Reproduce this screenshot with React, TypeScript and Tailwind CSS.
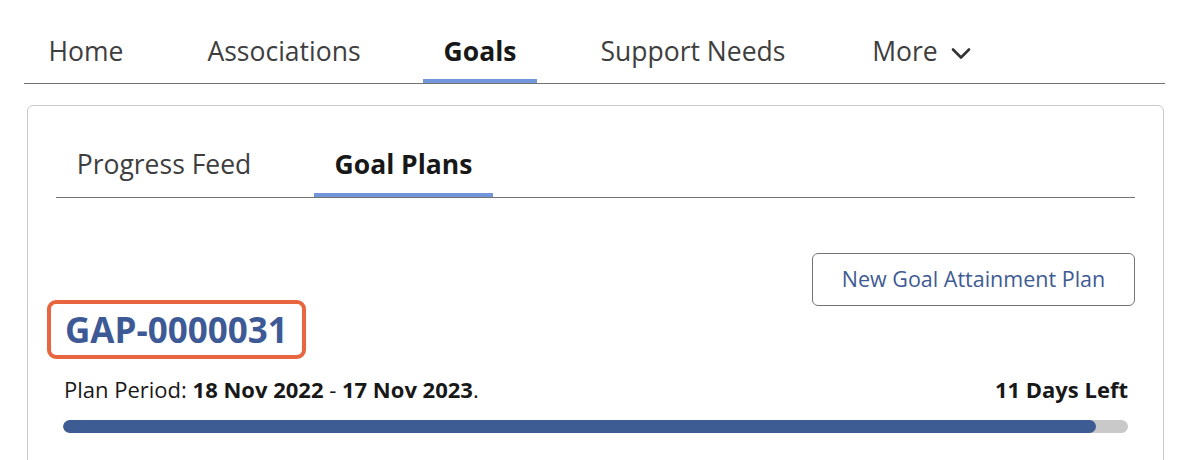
import React from "react";

const navItems = [
  { label: "Home", width: "w-[118px]" },
  { label: "Associations", width: "w-[196px]" },
  { label: "Goals", width: "w-[114px]", active: true },
  { label: "Support Needs", width: "w-[230px]" },
];

function Chevron() {
  return (
    <svg width="22" height="22" viewBox="0 0 22 22" fill="none" className="ml-[12px] mt-[4px]">
      <path d="M3 7.5 L11 15.5 L19 7.5" stroke="#333333" strokeWidth="2.6" strokeLinecap="round" strokeLinejoin="round" />
    </svg>
  );
}

export default function App() {
  const progress = 97;
  return (
    <div
      className="w-[1192px] h-[460px] bg-white overflow-hidden text-[#3e3e3e]"
      style={{ fontFamily: "'Open Sans', 'Noto Sans', sans-serif" }}
    >
      {/* Top nav */}
      <div className="ml-[24px] mr-[27px] pt-[30px] border-b border-[#747474]">
        <div className="flex gap-[41px] pl-[3px]">
          {navItems.map((item) => (
            <div
              key={item.label}
              className={`${item.width} h-[53px] flex justify-center items-start text-[26.5px] leading-[42px] border-b-4 ${
                item.active ? "border-[#7395db] font-bold text-[#181818]" : "border-transparent"
              }`}
            >
              {item.label}
            </div>
          ))}
          <div className="w-[146px] h-[53px] flex justify-center items-start text-[26.5px] leading-[42px]">
            <span>More</span>
            <span className="h-[42px] flex items-center">
              <Chevron />
            </span>
          </div>
        </div>
      </div>

      {/* Card */}
      <div className="ml-[27px] mr-[28px] mt-[21px] h-[400px] border border-[#c9c9c9] rounded-[6px] px-[28px]">
        <div className="border-b border-[#747474] pt-[38px]">
          <div className="flex gap-[43px] pl-[1px]">
            <div className="w-[214px] h-[53px] flex justify-center text-[26.5px] leading-[40px] border-b-4 border-transparent">
              Progress Feed
            </div>
            <div className="w-[179px] h-[53px] flex justify-center text-[26.5px] leading-[40px] border-b-4 border-[#7395db] font-bold text-[#181818]">
              Goal Plans
            </div>
          </div>
        </div>

        <div className="flex justify-end mt-[55px]">
          <button className="w-[323px] h-[53px] border border-[#747474] rounded-[6px] text-[21.5px] text-[#3e5b94] bg-white">
            New Goal Attainment Plan
          </button>
        </div>

        <div className="-mt-[6px] -ml-[9px]">
          <div className="inline-flex items-center h-[59px] pl-[14px] pr-[14px] border-4 border-[#e8663f] rounded-[9px]">
            <span className="text-[35px] font-bold text-[#3d5a96] leading-none">GAP-0000031</span>
          </div>
        </div>

        <div className="flex justify-between items-end mt-[16px] pl-[8px] pr-[7px] text-[22px] text-[#181818] leading-[28px]">
          <div>
            Plan Period: <span className="font-bold">18 Nov 2022</span> - <span className="font-bold">17 Nov 2023</span>.
          </div>
          <div className="font-bold">11 Days Left</div>
        </div>

        <div className="mt-[17px] ml-[7px] mr-[7px] h-[13px] rounded-full bg-[#c9c9c9] overflow-hidden">
          <div className="h-full rounded-full bg-[#3e5c94]" style={{ width: `${progress}%` }} />
        </div>
      </div>
    </div>
  );
}
